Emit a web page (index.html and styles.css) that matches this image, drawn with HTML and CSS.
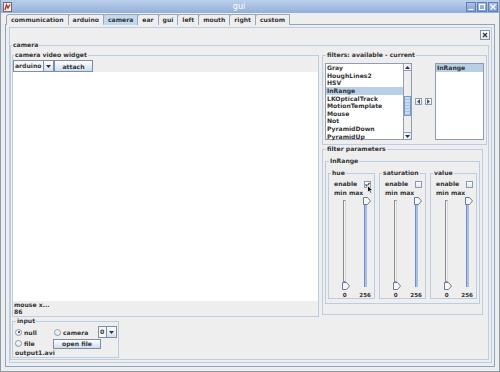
FILE: index.html
```html
<!DOCTYPE html>
<html lang="en">
<head>
    <meta charset="UTF-8">
    <title>gui</title>
    <link rel="stylesheet" href="styles.css">
</head>
<body>
<div class="window">
    <div class="titlebar">
        <span class="app-icon">
            <svg width="9" height="10" viewBox="0 0 9 10"><rect x="0.5" y="0.5" width="8" height="9" fill="#f2f2f2" stroke="#6f6f6f"/><path d="M2 8 L3.5 3 L5 6 L7 2.5" fill="none" stroke="#b8322a" stroke-width="1.4"/></svg>
        </span>
        <span class="title">gui</span>
        <div class="wm-buttons">
            <span class="wm-btn"><svg width="8" height="8" viewBox="0 0 8 8"><path d="M1.5 6.5 H6.5" stroke="#fff" stroke-width="1.2"/></svg></span>
            <span class="wm-btn"><svg width="8" height="8" viewBox="0 0 8 8"><rect x="1.5" y="1.5" width="5" height="5" fill="none" stroke="#fff"/></svg></span>
            <span class="wm-btn"><svg width="8" height="8" viewBox="0 0 8 8"><path d="M1.5 1.5 L6.5 6.5 M6.5 1.5 L1.5 6.5" stroke="#fff" stroke-width="1.2"/></svg></span>
        </div>
    </div>

    <div class="tabs">
        <span class="tab">communication</span>
        <span class="tab">arduino</span>
        <span class="tab active">camera</span>
        <span class="tab">ear</span>
        <span class="tab">gui</span>
        <span class="tab">left</span>
        <span class="tab">mouth</span>
        <span class="tab">right</span>
        <span class="tab">custom</span>
    </div>

    <div class="tabpane">
        <div class="frame">
            <div class="frame-bar">
                <span class="frame-close"><svg width="6" height="6" viewBox="0 0 6 6"><path d="M1 1 L5 5 M5 1 L1 5" stroke="#333" stroke-width="1.2"/></svg></span>
            </div>

            <fieldset class="group camera-group">
                <legend>camera</legend>
                <div class="cols">
                    <div class="col-left">
                        <fieldset class="group video">
                            <legend>camera video widget</legend>
                            <div class="video-tools">
                                <div class="combo combo-source">
                                    <span class="combo-text">arduino</span>
                                    <span class="combo-arrow"><svg width="5" height="3" viewBox="0 0 5 3"><path d="M0 0 H5 L2.5 3 Z" fill="#333"/></svg></span>
                                </div>
                                <span class="btn btn-attach">attach</span>
                            </div>
                            <div class="video-screen"></div>
                            <div class="mouse-info">
                                <div>mouse x...</div>
                                <div>86</div>
                            </div>
                        </fieldset>

                        <fieldset class="group input-group">
                            <legend>input</legend>
                            <div class="input-row">
                                <span class="radio-label radio-null"><span class="radio checked"></span>null</span>
                                <span class="radio-label radio-camera"><span class="radio"></span>camera</span>
                                <div class="combo combo-index">
                                    <span class="combo-text">0</span>
                                    <span class="combo-arrow"><svg width="5" height="3" viewBox="0 0 5 3"><path d="M0 0 H5 L2.5 3 Z" fill="#333"/></svg></span>
                                </div>
                            </div>
                            <div class="input-row">
                                <span class="radio-label radio-file"><span class="radio"></span>file</span>
                                <span class="btn btn-open">open file</span>
                            </div>
                            <div class="input-file">output1.avi</div>
                        </fieldset>
                    </div>

                    <div class="col-right">
                        <fieldset class="group filters">
                            <legend>filters: available - current</legend>
                            <div class="filter-lists">
                                <div class="list list-available">
                                    <ul class="list-items">
                                        <li>Gray</li>
                                        <li>HoughLines2</li>
                                        <li>HSV</li>
                                        <li class="selected">InRange</li>
                                        <li>LKOpticalTrack</li>
                                        <li>MotionTemplate</li>
                                        <li>Mouse</li>
                                        <li>Not</li>
                                        <li>PyramidDown</li>
                                        <li>PyramidUp</li>
                                    </ul>
                                    <div class="scrollbar">
                                        <span class="scroll-btn"><svg width="5" height="3" viewBox="0 0 5 3"><path d="M0 3 H5 L2.5 0 Z" fill="#333"/></svg></span>
                                        <div class="scroll-track"><span class="scroll-thumb"></span></div>
                                        <span class="scroll-btn"><svg width="5" height="3" viewBox="0 0 5 3"><path d="M0 0 H5 L2.5 3 Z" fill="#333"/></svg></span>
                                    </div>
                                </div>
                                <div class="move-btns">
                                    <span class="move-btn"><svg width="3" height="5" viewBox="0 0 3 5"><path d="M3 0 V5 L0 2.5 Z" fill="#555"/></svg></span>
                                    <span class="move-btn"><svg width="3" height="5" viewBox="0 0 3 5"><path d="M0 0 V5 L3 2.5 Z" fill="#555"/></svg></span>
                                </div>
                                <div class="list list-current">
                                    <ul class="list-items">
                                        <li class="selected">InRange</li>
                                    </ul>
                                </div>
                            </div>
                        </fieldset>

                        <fieldset class="group params">
                            <legend>filter parameters</legend>
                            <fieldset class="group inrange">
                                <legend>InRange</legend>
                                <div class="channels">
                                    <fieldset class="group channel">
                                        <legend>hue</legend>
                                        <div class="channel-row"><span>enable</span><span class="checkbox checked"><svg width="5" height="5" viewBox="0 0 5 5"><path d="M0.5 2.5 L2 4 L4.5 0.8" fill="none" stroke="#333" stroke-width="1.1"/></svg></span></div>
                                        <div class="channel-row">min max</div>
                                        <div class="sliders">
                                            <div class="slider slider-min">
                                                <span class="track"></span>
                                                <svg class="thumb" width="8" height="8" viewBox="0 0 8 8"><path d="M0.5 0.5 H4.5 L7.5 4 L4.5 7.5 H0.5 Z" fill="#f6f8fb" stroke="#6b7b90"/></svg>
                                                <span class="slider-value">0</span>
                                            </div>
                                            <div class="slider slider-max">
                                                <svg class="thumb" width="8" height="8" viewBox="0 0 8 8"><path d="M0.5 0.5 H4.5 L7.5 4 L4.5 7.5 H0.5 Z" fill="#f6f8fb" stroke="#6b7b90"/></svg>
                                                <span class="track"></span>
                                                <span class="slider-value">256</span>
                                            </div>
                                        </div>
                                    </fieldset>
                                    <fieldset class="group channel">
                                        <legend>saturation</legend>
                                        <div class="channel-row"><span>enable</span><span class="checkbox"></span></div>
                                        <div class="channel-row">min max</div>
                                        <div class="sliders">
                                            <div class="slider slider-min">
                                                <span class="track"></span>
                                                <svg class="thumb" width="8" height="8" viewBox="0 0 8 8"><path d="M0.5 0.5 H4.5 L7.5 4 L4.5 7.5 H0.5 Z" fill="#f6f8fb" stroke="#6b7b90"/></svg>
                                                <span class="slider-value">0</span>
                                            </div>
                                            <div class="slider slider-max">
                                                <svg class="thumb" width="8" height="8" viewBox="0 0 8 8"><path d="M0.5 0.5 H4.5 L7.5 4 L4.5 7.5 H0.5 Z" fill="#f6f8fb" stroke="#6b7b90"/></svg>
                                                <span class="track"></span>
                                                <span class="slider-value">256</span>
                                            </div>
                                        </div>
                                    </fieldset>
                                    <fieldset class="group channel">
                                        <legend>value</legend>
                                        <div class="channel-row"><span>enable</span><span class="checkbox"></span></div>
                                        <div class="channel-row">min max</div>
                                        <div class="sliders">
                                            <div class="slider slider-min">
                                                <span class="track"></span>
                                                <svg class="thumb" width="8" height="8" viewBox="0 0 8 8"><path d="M0.5 0.5 H4.5 L7.5 4 L4.5 7.5 H0.5 Z" fill="#f6f8fb" stroke="#6b7b90"/></svg>
                                                <span class="slider-value">0</span>
                                            </div>
                                            <div class="slider slider-max">
                                                <svg class="thumb" width="8" height="8" viewBox="0 0 8 8"><path d="M0.5 0.5 H4.5 L7.5 4 L4.5 7.5 H0.5 Z" fill="#f6f8fb" stroke="#6b7b90"/></svg>
                                                <span class="track"></span>
                                                <span class="slider-value">256</span>
                                            </div>
                                        </div>
                                    </fieldset>
                                </div>
                            </fieldset>
                        </fieldset>
                    </div>
                </div>
            </fieldset>
        </div>
    </div>

    <svg class="cursor" width="7" height="9" viewBox="0 0 7 9"><path d="M0.5 0.5 V7.5 L2.3 5.9 L3.6 8.5 L4.8 7.9 L3.6 5.4 H6 Z" fill="#111" stroke="#fff" stroke-width="0.8"/></svg>
</div>
</body>
</html>
```

FILE: styles.css
```css
:root {
    --text: #333333;
    --line: #bccde1;
    --edge: #8d9db2;
    --select: #b8cfe5;
    --bg: #eeeeee;
}

* {
    box-sizing: border-box;
}

body {
    margin: 0;
    background: var(--bg);
    font-family: 'DejaVu Sans', sans-serif;
    font-size: 6.1px;
    font-weight: bold;
    color: var(--text);
}

.window {
    position: relative;
    width: 500px;
    height: 372px;
    display: flex;
    flex-direction: column;
    border: 1px solid #8f9aa8;
    border-top: none;
    overflow: hidden;
}

/* title bar */
.titlebar {
    height: 13px;
    display: flex;
    align-items: center;
    padding: 0 1px 0 1px;
    background: linear-gradient(#bcd0ec, #93afd9);
    color: #fff;
}

.app-icon {
    display: flex;
    margin-left: 1px;
}

.title {
    flex: 1;
    text-align: center;
    font-size: 8px;
    font-weight: normal;
}

.wm-buttons {
    display: flex;
    gap: 1px;
}

.wm-btn {
    width: 10px;
    height: 10px;
    display: flex;
    align-items: center;
    justify-content: center;
    border: 1px solid #5f80b4;
    background: linear-gradient(#a9c1e6, #7f9fd1);
}

/* tabs */
.tabs {
    position: relative;
    z-index: 1;
    display: flex;
    padding: 1px 0 0 5px;
    margin-bottom: -1px;
}

.tab {
    height: 11px;
    padding: 0 4px;
    line-height: 9px;
    border: 1px solid #98a8bc;
    border-bottom: none;
    border-top-left-radius: 3px;
    background: var(--bg);
    margin-right: -1px;
}

.tab.active {
    background: #c4d8ec;
    height: 11px;
    border-bottom: 1px solid #c4d8ec;
}

.tabpane {
    flex: 1;
    display: flex;
    margin: 0 4px 4px 4px;
    padding: 2px 2px 3px 3px;
    border: 1px solid #8ea4c2;
}

.frame {
    flex: 1;
    display: flex;
    flex-direction: column;
    border: 1px solid var(--line);
}

.frame-bar {
    height: 13px;
    display: flex;
    justify-content: flex-end;
    padding: 2px 1px 0 0;
}

.frame-close {
    width: 10px;
    height: 10px;
    display: flex;
    align-items: center;
    justify-content: center;
    border: 1px solid #8393a8;
    background: linear-gradient(#ffffff, #dfe6ee);
}

/* titled borders */
.group {
    margin: 0;
    padding: 0;
    min-width: 0;
    border: 1px solid var(--line);
}

.group > legend {
    padding: 0 1px;
    margin-left: 1px;
    line-height: 8px;
}

.camera-group {
    flex: 1;
    display: flex;
    flex-direction: column;
    margin: 0 2px 2px 0;
    padding: 2px 1px 1px 1px;
}

.camera-group > legend {
    margin-left: 0;
}

.cols {
    flex: 1;
    display: flex;
    gap: 3px;
}

.col-left {
    width: 307px;
    display: flex;
    flex-direction: column;
}

.col-right {
    width: 165px;
    display: flex;
    flex-direction: column;
}

/* video widget */
.video {
    flex: 1;
    display: flex;
    flex-direction: column;
    padding-top: 1px;
}

.video-tools {
    display: flex;
    height: 12px;
}

.combo {
    display: flex;
    border: 1px solid #7e8ea4;
    background: #f4f6f8;
}

.combo-text {
    flex: 1;
    padding-left: 1px;
    line-height: 10px;
    border-right: 1px solid #7e8ea4;
}

.combo-arrow {
    width: 9px;
    display: flex;
    align-items: center;
    justify-content: center;
    background: linear-gradient(#ffffff, #d4e0ee);
}

.combo-source {
    width: 41px;
}

.btn {
    display: flex;
    align-items: center;
    justify-content: center;
    border: 1px solid #7e8ea4;
    background: linear-gradient(#ffffff, #cddcee);
}

.btn-attach {
    width: 39px;
}

.video-screen {
    flex: 1;
    background: #ffffff;
}

.mouse-info {
    padding: 1px 0 0 1px;
    line-height: 6.8px;
}

/* input */
.input-group {
    width: 107px;
    height: 41px;
    padding: 1px 1px 0 2px;
}

.input-row {
    display: flex;
    align-items: center;
}

.input-row:first-of-type {
    height: 12px;
}

.input-row + .input-row {
    height: 11px;
}

.radio-label {
    display: flex;
    align-items: center;
    gap: 2px;
}

.radio-null {
    width: 39px;
}

.radio-camera {
    width: 44px;
}

.radio-file {
    width: 38px;
}

.radio {
    width: 7px;
    height: 7px;
    border-radius: 50%;
    border: 1px solid #8a99ad;
    background: linear-gradient(#ffffff, #dfe7f0);
    position: relative;
}

.radio.checked::after {
    content: "";
    position: absolute;
    left: 1.5px;
    top: 1.5px;
    width: 2px;
    height: 2px;
    border-radius: 50%;
    background: #333;
}

.combo-index {
    width: 19px;
    height: 12px;
}

.btn-open {
    width: 48px;
    height: 10px;
}

.input-file {
    line-height: 8px;
    padding-left: 0;
}

/* filter lists */
.filters {
    height: 94px;
    padding: 4px 2px 0 2px;
}

.filter-lists {
    display: flex;
    align-items: center;
    height: 77px;
}

.list {
    height: 77px;
    display: flex;
    border: 1px solid var(--edge);
    background: #ffffff;
}

.list-available {
    width: 87px;
}

.list-current {
    flex: 1;
}

.list-items {
    flex: 1;
    margin: 0;
    padding: 0;
    list-style: none;
}

.list-items li {
    height: 7.65px;
    line-height: 7.65px;
    padding-left: 1px;
}

.list-items li.selected {
    background: var(--select);
}

.scrollbar {
    width: 8px;
    display: flex;
    flex-direction: column;
    border-left: 1px solid var(--edge);
    background: #eeeeee;
}

.scroll-btn {
    height: 7px;
    display: flex;
    align-items: center;
    justify-content: center;
    background: linear-gradient(90deg, #ffffff, #dde6f0);
    border-bottom: 1px solid var(--edge);
}

.scroll-btn:last-child {
    border-bottom: none;
    border-top: 1px solid var(--edge);
}

.scroll-track {
    flex: 1;
    padding-top: 25px;
}

.scroll-thumb {
    display: block;
    height: 20px;
    border: 1px solid #7d98c4;
    background: repeating-linear-gradient(#c8daf0 0 2px, #a8c0e2 2px 3px);
}

.move-btns {
    display: flex;
    gap: 3px;
    margin: 0 3px;
}

.move-btn {
    width: 7px;
    height: 7px;
    display: flex;
    align-items: center;
    justify-content: center;
    border: 1px solid var(--edge);
    background: linear-gradient(#ffffff, #dfe6ee);
}

/* filter parameters */
.params {
    height: 170px;
    margin-right: 4px;
    padding: 4px 2px 0 2px;
}

.inrange {
    height: 147px;
    padding: 4px 2px 0 2px;
}

.channels {
    display: flex;
    gap: 4px;
}

.channel {
    width: 47px;
    height: 130px;
    padding: 3px 3px 0 0;
}

.channel > legend {
    margin-left: 2px;
}

.channel-row {
    height: 8px;
    line-height: 8px;
    display: flex;
    align-items: center;
    justify-content: space-between;
    padding-left: 5px;
}

.channel-row + .channel-row {
    height: 9px;
    line-height: 9px;
}

.checkbox {
    width: 7px;
    height: 7px;
    display: flex;
    align-items: center;
    justify-content: center;
    border: 1px solid #8a99ad;
    background: linear-gradient(#ffffff, #dfe7f0);
}

.sliders {
    display: flex;
    gap: 9px;
    padding-left: 10px;
}

.slider {
    width: 12px;
    height: 102px;
    display: flex;
    flex-direction: column;
    align-items: center;
}

.track {
    width: 3px;
    flex: 1;
}

.slider-min .track {
    margin-top: 3px;
    border: 1px solid #8c8c8c;
    border-right-color: #d8d8d8;
    background: #f4f4f4;
}

.slider-max .track {
    margin-bottom: 5px;
    border-left: 1px solid #6f8fc6;
    background: #a8c0e8;
}

.thumb {
    display: block;
    margin-left: 3px;
}

.slider-min .thumb {
    margin-bottom: 2px;
}

.slider-value {
    height: 7px;
    line-height: 7px;
    font-size: 5.6px;
}

.cursor {
    position: absolute;
    left: 366px;
    top: 185px;
}
```
